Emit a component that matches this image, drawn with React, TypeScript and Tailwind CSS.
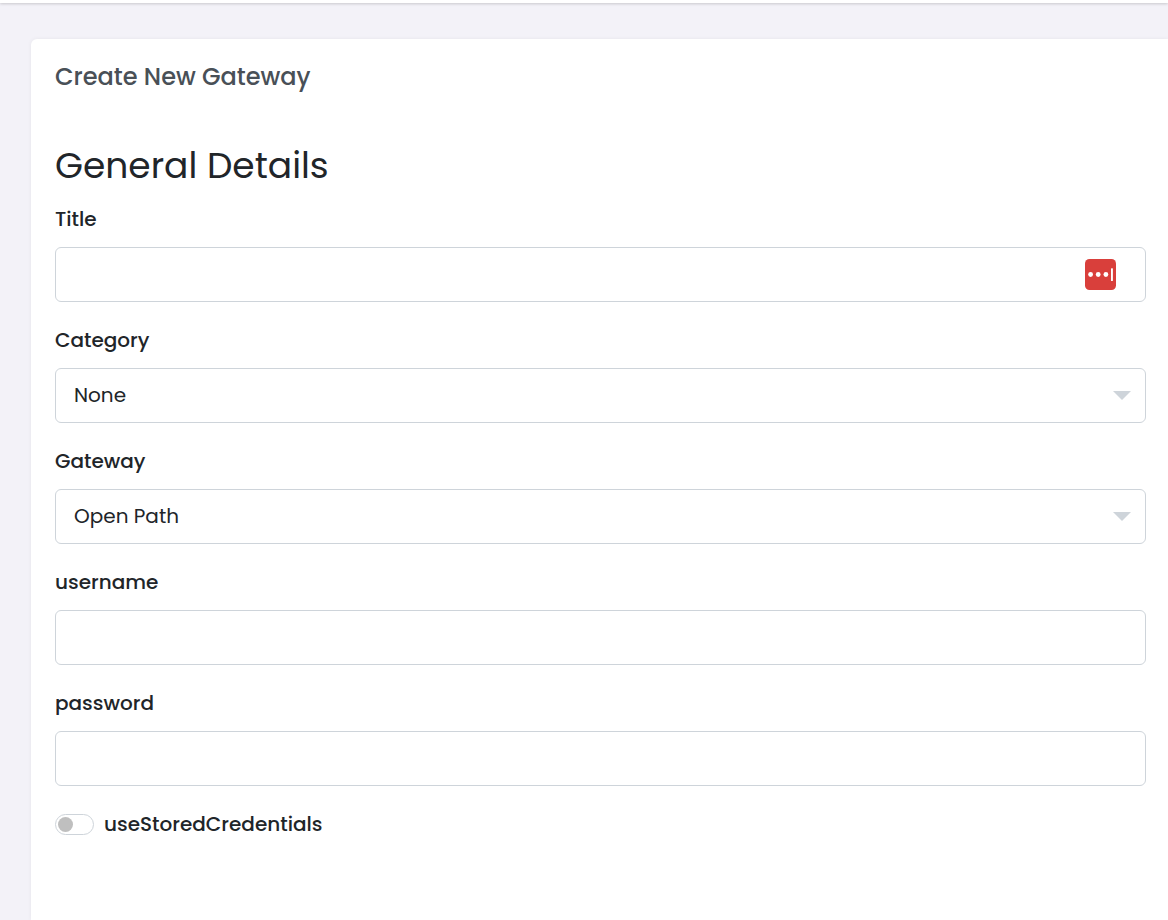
import { useState } from "react";
import type { ReactNode } from "react";

const inputClass =
  "h-[55px] w-full rounded-md border border-[#ced4da] bg-white px-[18px] text-xl text-[#212529] outline-none focus:border-blue-400";

interface FieldProps {
  id: string;
  label: string;
  children: ReactNode;
}

const Field = ({ id, label, children }: FieldProps) => (
  <div>
    <label
      htmlFor={id}
      className="mb-[13px] block text-xl leading-[30px] font-medium"
    >
      {label}
    </label>
    {children}
  </div>
);

interface SelectFieldProps {
  id: string;
  label: string;
  value: string;
  options: string[];
  onChange: (value: string) => void;
}

const SelectField = ({
  id,
  label,
  value,
  options,
  onChange,
}: SelectFieldProps) => (
  <Field id={id} label={label}>
    <div className="relative">
      <select
        id={id}
        value={value}
        onChange={(e) => onChange(e.target.value)}
        className={`${inputClass} appearance-none pb-[2px]`}
      >
        {options.map((option) => (
          <option key={option} value={option}>
            {option}
          </option>
        ))}
      </select>
      <svg
        viewBox="0 0 18 9"
        className="pointer-events-none absolute top-[23px] right-[15px] h-[9px] w-[18px] fill-[#ced4da]"
        aria-hidden="true"
      >
        <path d="M0 0h18L9 9z" />
      </svg>
    </div>
  </Field>
);

const PasswordManagerIcon = () => (
  <svg viewBox="0 0 31 31" className="size-[31px]" aria-hidden="true">
    <rect width="31" height="31" rx="4.5" fill="#d93f3b" />
    <circle cx="5.6" cy="15.5" r="2.4" fill="#fff" />
    <circle cx="13.2" cy="15.5" r="2.4" fill="#fff" />
    <circle cx="20.9" cy="15.5" r="2.4" fill="#fff" />
    <rect x="26" y="9.3" width="1.9" height="12.6" rx="0.5" fill="#fff" />
  </svg>
);

const App = () => {
  const [title, setTitle] = useState("");
  const [category, setCategory] = useState("None");
  const [gateway, setGateway] = useState("Open Path");
  const [username, setUsername] = useState("");
  const [password, setPassword] = useState("");
  const [useStored, setUseStored] = useState(false);

  return (
    <div className="flex min-h-screen flex-col bg-[#f3f2f8] font-[Poppins,Inter,sans-serif] text-[#212529]">
      {/* Top bar */}
      <div className="h-[3px] bg-white shadow-[0_1px_3px_rgba(0,0,0,0.18)]" />

      <main className="flex flex-1 flex-col pt-9 pl-[31px]">
        <div className="flex-1 rounded-tl-md bg-white pr-[22px] pb-20 pl-6 shadow-[0_0_4px_rgba(0,0,0,0.06)]">
          {/* Header */}
          <h4 className="pt-5 text-2xl leading-9 font-medium text-[#495057]">
            Create New Gateway
          </h4>

          <form onSubmit={(e) => e.preventDefault()}>
            <h2 className="mt-12 mb-4 text-4xl leading-[45px]">
              General Details
            </h2>

            <div className="space-y-[23px]">
              <Field id="title" label="Title">
                <div className="relative">
                  <input
                    id="title"
                    type="text"
                    value={title}
                    onChange={(e) => setTitle(e.target.value)}
                    className={inputClass}
                  />
                  <div className="absolute top-3 right-[30px]">
                    <PasswordManagerIcon />
                  </div>
                </div>
              </Field>

              <SelectField
                id="category"
                label="Category"
                value={category}
                options={["None"]}
                onChange={setCategory}
              />

              <SelectField
                id="gateway"
                label="Gateway"
                value={gateway}
                options={["Open Path"]}
                onChange={setGateway}
              />

              <Field id="username" label="username">
                <input
                  id="username"
                  type="text"
                  value={username}
                  onChange={(e) => setUsername(e.target.value)}
                  className={inputClass}
                />
              </Field>

              <Field id="password" label="password">
                <input
                  id="password"
                  type="password"
                  value={password}
                  onChange={(e) => setPassword(e.target.value)}
                  className={inputClass}
                />
              </Field>

              {/* Switch */}
              <div className="flex items-center gap-[10px]">
                <input
                  id="useStoredCredentials"
                  type="checkbox"
                  role="switch"
                  checked={useStored}
                  onChange={(e) => setUseStored(e.target.checked)}
                  className="flex h-[21px] w-[39px] appearance-none items-center rounded-full border border-[#ced4da] px-[2px] before:size-[15px] before:rounded-full before:bg-[#bfbfbf] checked:justify-end checked:bg-blue-500 checked:before:bg-white"
                />
                <label
                  htmlFor="useStoredCredentials"
                  className="text-xl leading-[30px] font-medium"
                >
                  useStoredCredentials
                </label>
              </div>
            </div>
          </form>
        </div>
      </main>
    </div>
  );
};

export default App;
